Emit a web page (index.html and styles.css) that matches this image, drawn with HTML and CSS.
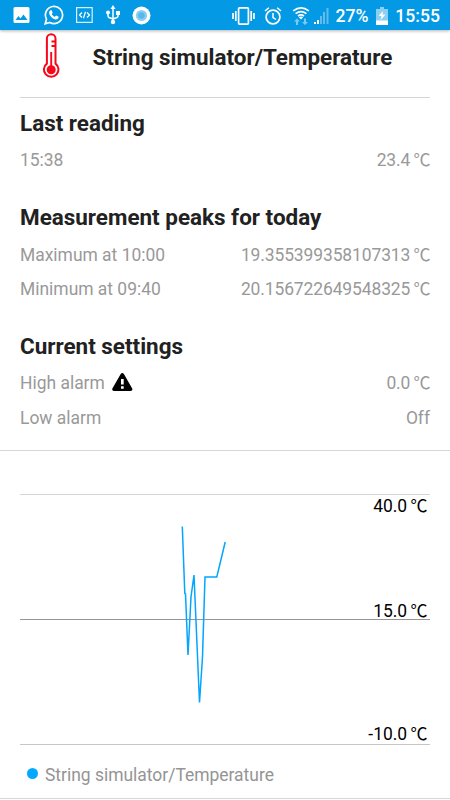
FILE: index.html
```html
<!DOCTYPE html>
<html lang="en">
<head>
    <meta charset="UTF-8">
    <meta name="viewport" content="width=device-width, initial-scale=1.0">
    <title>String simulator/Temperature</title>
    <link rel="stylesheet" href="styles.css">
</head>
<body>
    <div class="status-bar">
        <div class="notifications">
            <svg width="18" height="16" viewBox="0 0 18 16"><path fill="#fff" fill-rule="evenodd" d="M2 0h13a1.500 1.500 0 0 1 1.500 1.500v13A1.500 1.500 0 0 1 15 16H2a1.500 1.500 0 0 1-1.500-1.500v-13A1.500 1.500 0 0 1 2 0zM2.500 13h12l-4-5.500-3 4-2-2.400z"/></svg>
            <svg width="20" height="20" viewBox="0 0 20 20"><path fill="none" stroke="#fff" stroke-width="1.700" d="M1.200 18.800l1.300-4.600a8.600 8.600 0 1 1 3.300 3.300z"/><path fill="#fff" d="M6.500 5.200h1.200l1 2.500-.9 1.200c.7 1.400 1.700 2.300 3.100 2.900l1.200-1.200 2.500 1.200c0 1.800-1.200 2.700-2.700 2.700-3.300-.5-6.200-3.300-6.800-6.500 0-1.100.5-2.200 1.400-2.800z"/></svg>
            <svg width="17" height="16" viewBox="0 0 17 16"><path fill="none" stroke="#fff" stroke-opacity=".85" stroke-width="1.200" d="M.6.600h15.600v14.800H.600z"/><path fill="none" stroke="#fff" stroke-width="1.200" d="M6 5.500L3.500 8 6 10.500M11 5.500L13.500 8 11 10.500M9.500 4.800l-2 6.400"/></svg>
            <svg width="14" height="20" viewBox="0 0 14 20"><path fill="none" stroke="#fff" stroke-width="1.500" d="M7 3v15M2 7v4q0 1 1 1.500L7 14M12 8v3q0 1-1 1.500L7 14"/><path fill="#fff" d="M7 0l2.500 4h-5zM10 6h4v4h-4z"/><circle cx="2" cy="7.500" r="2" fill="#fff"/><circle cx="7" cy="17" r="2.200" fill="#fff"/></svg>
            <svg width="19" height="19" viewBox="0 0 19 19"><circle cx="9.500" cy="9.500" r="9" fill="#fff"/><circle cx="9.500" cy="9.500" r="5.600" fill="#8bcef3"/><circle cx="9.500" cy="9.500" r="3.300" fill="#58b8eb"/></svg>
        </div>
        <div class="system">
            <svg class="vibrate" width="23" height="18" viewBox="0 0 23 18"><path fill="none" stroke="#fff" stroke-width="1.700" d="M7.400.900h8.200q.8 0 .8.800v14.600q0 .8-.8.800H7.400q-.8 0-.8-.8V1.700q0-.8.800-.8zM3.800 4v10M19.200 4v10M1 6v6M22 6v6"/></svg>
            <svg class="alarm" width="18" height="18" viewBox="0 0 18 18"><circle cx="9" cy="10" r="6.900" fill="none" stroke="#fff" stroke-width="1.700"/><path fill="none" stroke="#fff" stroke-width="1.500" d="M9 6v4.500l3 2M1 4l3.800-3.200M17 4l-3.800-3.200"/></svg>
            <svg class="wifi" width="18" height="18" viewBox="0 0 18 18"><path fill="none" stroke="#fff" stroke-width="1.600" d="M1.200 3.900q7.800-6 15.600 0M3.600 6.600q5.400-4 10.800 0M6 9q3-2.200 6 0"/><path fill="#fff" d="M6.800 10.300q2.200-1.500 4.400 0L9 12.600z"/><path fill="#7dcaf1" d="M5 11.500l3 3H6V18H4v-3.500H2zM13 18l-3-3h2v-3.500h2V15h2z"/></svg>
            <svg class="signal" width="15" height="16" viewBox="0 0 15 16"><path fill="#fff" d="M0 14h2v2H0zM3 12h2v4H3z"/><path fill="#61bcee" d="M6 8h2v8H6zM9 4h2v12H9zM12.500 0h2v16h-2z"/></svg>
            <span class="percent">27%</span>
            <svg class="battery" width="12" height="18" viewBox="0 0 12 18"><path fill="#8bd0f3" d="M4 0h4v2h4v12H0V2h4z"/><path fill="#fff" d="M0 13.500h12V18H0z"/><path fill="#fff" d="M7 4L2.500 9h3L4.500 13l5-5.500h-3z"/></svg>
            <span class="time">15:55</span>
        </div>
    </div>

    <div class="header">
        <svg class="thermometer" width="18" height="46" viewBox="0 0 18 46">
            <path fill="none" stroke="#f80718" stroke-width="2" d="M4.900 30.600V5.600a4.300 4.300 0 0 1 8.600 0v25a7.300 7.300 0 1 1-8.600 0z"/>
            <path fill="none" stroke="#f80718" stroke-width="1.900" d="M9.200 19v15M9.500 8.500h4M9.500 13h4"/>
            <circle cx="9.200" cy="36.700" r="4.500" fill="#f80718"/>
        </svg>
        <h1>String simulator/Temperature</h1>
    </div>

    <div class="readings">
        <div class="section last">
            <h2>Last reading</h2>
            <div class="row"><span>15:38</span><span class="value">23.4 <span class="unit">℃</span></span></div>
        </div>
        <div class="section peaks">
            <h2>Measurement peaks for today</h2>
            <div class="row"><span>Maximum at 10:00</span><span class="value">19.355399358107313 <span class="unit">℃</span></span></div>
            <div class="row"><span>Minimum at 09:40</span><span class="value">20.156722649548325 <span class="unit">℃</span></span></div>
        </div>
        <div class="section settings">
            <h2>Current settings</h2>
            <div class="row">
                <span class="label">High alarm
                    <svg width="21" height="18" viewBox="0 0 21 18"><path fill="#000" fill-rule="evenodd" d="M8.700 1q1.600-2 3.200 0l8.300 14.500q.8 2.300-1.600 2.500H2Q-.4 17.800.400 15.500zM9 6v5.500h2.700V6zM9 13.200v2.600h2.700v-2.600z"/></svg>
                </span>
                <span class="value">0.0 <span class="unit">℃</span></span>
            </div>
            <div class="row"><span>Low alarm</span><span>Off</span></div>
        </div>
    </div>

    <div class="chart-card">
        <div class="chart">
            <div class="band top"><span>40.0 <span class="unit">℃</span></span><span class="mid">15.0 <span class="unit">℃</span></span></div>
            <div class="band bottom"><span>-10.0 <span class="unit">℃</span></span></div>
            <svg class="line" width="410" height="251" viewBox="0 0 410 251">
                <polyline points="162.300,32.500 164.800,99.500 165.500,100 168,161 171,103 174,81 179.500,208.500 182.500,163 185,83 196.800,83 205.200,48"/>
            </svg>
        </div>
        <div class="legend"><span class="dot"></span>String simulator/Temperature</div>
    </div>
</body>
</html>
```

FILE: styles.css
```css
* {
    box-sizing: border-box;
}
body {
    margin: 0;
    height: 800px;
    overflow: hidden;
    background: #fff;
    color: #212121;
    font-family: Roboto, "Noto Sans CJK SC", sans-serif;
}
svg {
    display: block;
    flex: none;
}
h1, h2 {
    margin: 0;
    font-size: 22.45px;
    font-weight: 700;
    line-height: 28px;
}
.status-bar {
    display: flex;
    align-items: center;
    justify-content: space-between;
    position: relative;
    height: 30px;
    padding: 0 10px 0 13px;
    background: #0399e5;
    color: #fff;
    box-shadow: 0 1px 3px rgba(0, 0, 0, 0.3);
}
.notifications {
    display: flex;
    align-items: center;
    gap: 12.5px;
}
.system {
    display: flex;
    align-items: center;
    padding-top: 1px;
    font-size: 17.6px;
    font-weight: 500;
}
.vibrate {
    margin-right: 1px;
}
.alarm {
    margin-left: 8px;
}
.wifi {
    margin-left: 10px;
}
.signal {
    margin-left: 4px;
}
.percent {
    margin-left: 6px;
}
.battery {
    margin-left: 8px;
}
.time {
    margin-left: 7px;
}
.header {
    display: flex;
    height: 68px;
    margin: 0 20px;
    padding: 3px 0 0 22px;
    border-bottom: 1px solid #d5d5d5;
}
.header h1 {
    margin: 10px 0 0 32.5px;
}
.readings {
    height: 353px;
    padding: 11px 20px 0;
    border-bottom: 1px solid #d8d8d8;
}
.section {
    margin-bottom: 26px;
}
.row {
    display: flex;
    align-items: center;
    justify-content: space-between;
    height: 34px;
    color: #999;
    font-size: 17.45px;
    line-height: 20px;
}
.value {
    letter-spacing: -0.1px;
}
.unit {
    margin-left: -1px;
    font-size: 17px;
    line-height: 0;
    letter-spacing: -0.5px;
}
.last {
    margin-bottom: 29px;
}
.last .row {
    margin-top: 8px;
    height: 29px;
}
.peaks h2 {
    margin-bottom: 7px;
}
.settings .row {
    height: 35px;
}
.settings h2 {
    margin-bottom: 5px;
}
.label {
    display: flex;
    gap: 7px;
}
.chart-card {
    height: 348px;
    padding: 43px 20px 0;
    border-bottom: 1px solid #d8d8d8;
}
.chart {
    position: relative;
    height: 251px;
    border-bottom: 1px solid #c6c6c6;
    color: #000;
    font-size: 17.45px;
    line-height: 22px;
}
.band {
    display: flex;
    flex-direction: column;
    align-items: flex-end;
    justify-content: space-between;
    height: 125px;
    padding-right: 3px;
    border-top: 1px solid #d5d5d5;
}
.mid {
    margin-bottom: -3px;
}
.bottom {
    justify-content: flex-end;
    padding-top: 1px;
    border-color: #969696;
}
.bottom span {
    margin-bottom: -1px;
}
.line {
    position: absolute;
    top: 0;
    left: 0;
}
.line polyline {
    fill: none;
    stroke: #03a5ff;
    stroke-width: 1.5;
}
.legend {
    display: flex;
    align-items: center;
    gap: 7px;
    height: 60px;
    padding-left: 7px;
    color: #949494;
    font-size: 17.45px;
}
.dot {
    width: 11px;
    height: 11px;
    margin-top: -3px;
    border-radius: 50%;
    background: #03a9ff;
}
```
